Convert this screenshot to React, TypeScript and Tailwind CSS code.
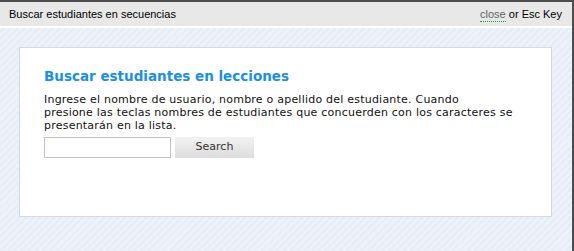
import React from "react";

export default function App() {
  return (
    <div className="w-[574px] h-[251px] overflow-hidden border-t-2 border-r-2 border-[#4d4d4d] flex flex-col bg-[repeating-linear-gradient(135deg,#e7edf7_0px,#e7edf7_2px,#edf1f9_2px,#edf1f9_5px)]">
      <div className="h-[24px] shrink-0 bg-[#e8e8e8] border-b-2 border-white box-content flex items-center justify-between pl-[9px] pr-[10px] text-[11px] text-black font-['Liberation_Sans',Arial,sans-serif]">
        <span>Buscar estudiantes en secuencias</span>
        <span>
          <span className="text-[#666] border-b border-dotted border-[#2aa02a] leading-[13px] inline-block">close</span>
          <span> or Esc Key</span>
        </span>
      </div>
      <div className="pl-[19px] pr-[20px] pt-[19px]">
        <div className="h-[170px] bg-white border border-[#d3d9e2] pl-[24px] pr-[10px] pt-[18px] font-['DejaVu_Sans',Verdana,sans-serif]">
          <h2 className="text-[13.5px] font-bold text-[#1b8fe2] leading-[20px]">Buscar estudiantes en lecciones</h2>
          <p className="mt-[7px] text-[11px] leading-[13px] tracking-[0.22px] text-[#111] whitespace-nowrap">
            Ingrese el nombre de usuario, nombre o apellido del estudiante. Cuando<br />
            presione las teclas nombres de estudiantes que concuerden con los caracteres se<br />
            presentarán en la lista.
          </p>
          <div className="mt-[5px] flex items-center gap-[4px]">
            <input className="w-[127px] h-[21px] border border-[#c2c2c2] bg-white outline-none" />
            <button className="w-[79px] h-[21px] bg-[linear-gradient(#f2f2f2,#dcdcdc)] text-[11px] text-[#333] font-['DejaVu_Sans',Verdana,sans-serif]">Search</button>
          </div>
        </div>
      </div>
    </div>
  );
}
